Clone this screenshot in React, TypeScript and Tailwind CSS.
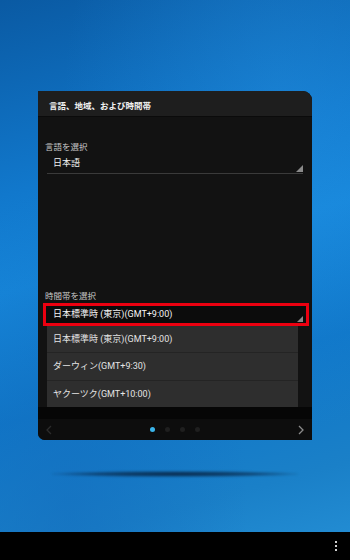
import React from "react";

const font = { fontFamily: 'Roboto, "Noto Sans CJK JP", sans-serif' };

function Corner() {
  return (
    <svg width="7" height="7" viewBox="0 0 7 7" className="absolute right-0 bottom-[1px]">
      <polygon points="7,0 7,7 0,7" fill="#8a8a8a" />
    </svg>
  );
}

export default function App() {
  return (
    <div
      className="w-[350px] h-[560px] flex flex-col overflow-hidden bg-[linear-gradient(165deg,#0a5aa3_0%,#1178cc_30%,#1686da_45%,#0f76c8_65%,#1a80c8_85%,#2590d6_100%)]"
      style={font}
    >
      <div className="flex-1 flex flex-col pt-[91px] pl-[38px] relative">
        <div className="absolute inset-0 bg-[radial-gradient(ellipse_at_80%_20%,rgba(40,150,230,0.35),transparent_55%)]" />
        <div className="absolute inset-0 bg-[radial-gradient(ellipse_at_20%_95%,rgba(20,110,190,0.6),transparent_45%)]" />
        <div className="relative w-[274px] h-[349px] flex flex-col bg-[#111111] rounded-tr-[9px] rounded-bl-[7px] overflow-hidden">
          <div className="h-[26px] bg-[#1e1e1e] border-b border-[#0b0b0b] flex items-center pl-[11px] pt-[6px]">
            <span className="text-[8.5px] font-bold text-[#f0f0f0] leading-none">言語、地域、および時間帯</span>
          </div>
          <div className="flex-1 flex flex-col pt-[23px] bg-[#121212]">
            <div className="pl-[7px] h-[14px] flex items-center text-[8.5px] text-[#c8c8c8] leading-none">言語を選択</div>
            <div className="relative ml-[9px] w-[256px] h-[20px] border-b border-[#3a3a3a] flex items-center pl-[6px] text-[9px] text-[#f0f0f0] leading-none">
              日本語
              <Corner />
            </div>
            <div className="h-[115px]" />
            <div className="pl-[7px] h-[14px] flex items-center text-[8.5px] text-[#c8c8c8] leading-none">時間帯を選択</div>
            <div className="relative ml-[5px] w-[266px] h-[23px] border-[3px] border-[#ec0010] flex items-center pl-[7px] text-[9px] text-[#f6f6f6] leading-none bg-[#0c0c0c]">
              日本標準時 (東京)(GMT+9:00)
              <div className="absolute right-[3px] bottom-[1px]">
                <svg width="6" height="6" viewBox="0 0 6 6">
                  <polygon points="6,0 6,6 0,6" fill="#8a8a8a" />
                </svg>
              </div>
            </div>
            <div className="ml-[9px] w-[251px] flex flex-col bg-[#2e2e2e]">
              <div className="h-[27px] flex items-center pl-[6px] text-[9px] text-[#e4e4e4] leading-none border-b border-[#242424]">日本標準時 (東京)(GMT+9:00)</div>
              <div className="h-[28px] flex items-center pl-[6px] text-[9px] text-[#e4e4e4] leading-none border-b border-[#242424]">ダーウィン(GMT+9:30)</div>
              <div className="h-[26px] flex items-center pl-[6px] text-[9px] text-[#e4e4e4] leading-none">ヤクーツク(GMT+10:00)</div>
            </div>
            <div className="flex-1 bg-[#060606]" />
          </div>
          <div className="h-[21px] bg-[#0d0d0d] flex items-center justify-between px-[8px]">
            <svg width="6" height="10" viewBox="0 0 6 10">
              <polyline points="5,1 1,5 5,9" fill="none" stroke="#2c2c2c" strokeWidth="1.3" />
            </svg>
            <div className="flex items-center gap-[10px] mr-[1px]">
              <div className="w-[5px] h-[5px] rounded-full bg-[#3ab4ea]" />
              <div className="w-[5px] h-[5px] rounded-full bg-[#1f1f1f]" />
              <div className="w-[5px] h-[5px] rounded-full bg-[#1f1f1f]" />
              <div className="w-[5px] h-[5px] rounded-full bg-[#1f1f1f]" />
            </div>
            <svg width="6" height="10" viewBox="0 0 6 10">
              <polyline points="1,1 5,5 1,9" fill="none" stroke="#8a8a8a" strokeWidth="1.3" />
            </svg>
          </div>
        </div>
        <div className="relative mt-[31px] ml-[14px] w-[246px] h-[6px] rounded-full bg-[radial-gradient(ellipse_at_center,rgba(8,35,65,0.95)_0%,rgba(8,35,65,0.6)_45%,transparent_75%)] blur-[1px]" />
      </div>
      <div className="h-[28px] bg-black flex items-center justify-end pr-[13px]">
        <div className="flex flex-col gap-[2px]">
          <div className="w-[2px] h-[2px] bg-[#cfcfcf]" />
          <div className="w-[2px] h-[2px] bg-[#cfcfcf]" />
          <div className="w-[2px] h-[2px] bg-[#cfcfcf]" />
        </div>
      </div>
    </div>
  );
}
